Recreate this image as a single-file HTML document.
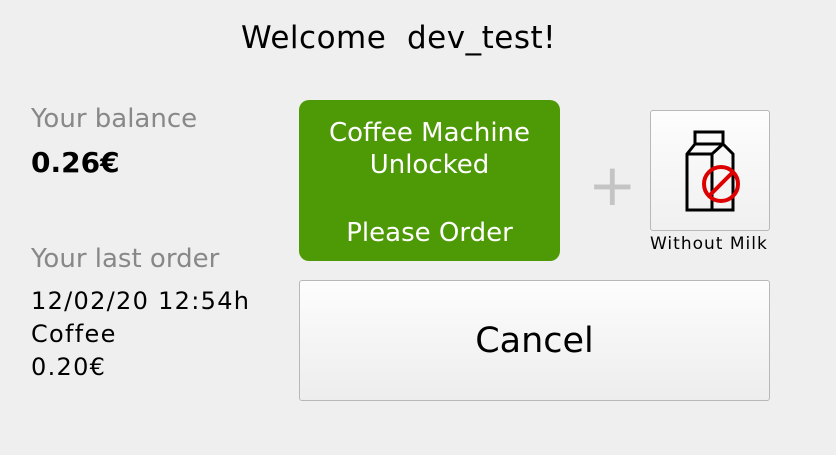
<!DOCTYPE html>
<html><head><style>
body{margin:0;width:836px;height:455px;background:#efefef;font-family:"DejaVu Sans",sans-serif;position:relative;overflow:hidden}
.a{position:absolute;white-space:nowrap}
</style></head><body>
<div class="a" style="left:241px;top:20px;font-size:31px;letter-spacing:0.5px;color:#000">Welcome&nbsp; dev_test!</div>
<div class="a" style="left:31px;top:104px;font-size:26px;color:#888">Your balance</div>
<div class="a" style="left:31px;top:146px;font-size:28px;font-weight:bold;color:#000">0.26€</div>
<div class="a" style="left:31px;top:244px;font-size:26px;color:#888">Your last order</div>
<div class="a" style="left:31px;top:285px;font-size:24px;letter-spacing:1.3px;line-height:33px;color:#000">12/02/20 12:54h<br>Coffee<br>0.20€</div>
<div class="a" style="left:299px;top:100px;width:261px;height:161px;background:#4e9a06;border-radius:10px;color:#fff;font-size:26px;text-align:center;line-height:32px">
<div style="margin-top:17px">Coffee Machine<br>Unlocked</div><div style="margin-top:36px">Please Order</div></div>
<div class="a" style="left:588px;top:150px;font-size:58px;line-height:70px;color:#c4c4c4">+</div>
<div class="a" style="left:650px;top:110px;width:118px;height:119px;border:1px solid #b8b8b8;border-radius:3px;background:linear-gradient(#fdfdfd,#f0f0f0)">
<svg width="118" height="119" viewBox="650 110 118 119" style="position:absolute;left:0;top:0">
<g fill="none" stroke="#000" stroke-width="3">
<rect x="694" y="131" width="28" height="12"/>
<path d="M694 143 L686 153 L686 209 L732 209 L732 153 L722 143 M686 153 L711 153 L722 143 M711 153 L711 209"/>
</g>
<circle cx="720" cy="183" r="17" fill="none" stroke="#d00" stroke-width="4"/>
<line x1="708" y1="195" x2="732" y2="171" stroke="#d00" stroke-width="4"/>
</svg></div>
<div class="a" style="left:650px;top:234px;font-size:17px;letter-spacing:1px;color:#000">Without Milk</div>
<div class="a" style="left:299px;top:280px;width:469px;height:119px;border:1px solid #b8b8b8;border-radius:3px;background:linear-gradient(#fdfdfd,#ededed);text-align:center;line-height:121px;font-size:35px;color:#000">Cancel</div>
</body></html>
